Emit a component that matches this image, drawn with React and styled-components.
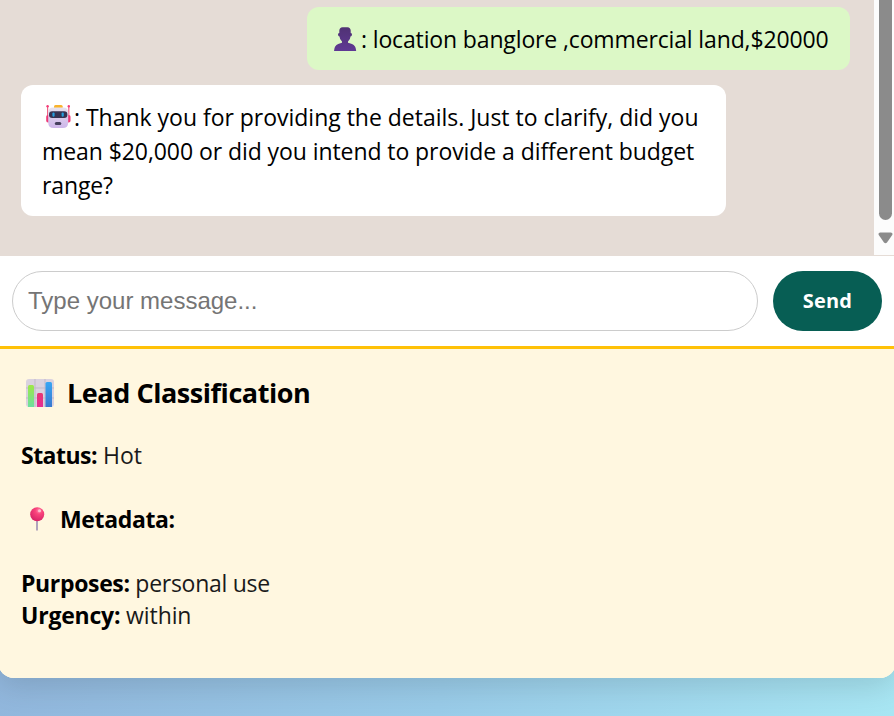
import React from "react";
import styled, { createGlobalStyle } from "styled-components";

const GlobalStyle = createGlobalStyle`
  * { box-sizing: border-box; }
  html, body { margin: 0; height: 716px; overflow: hidden; }
  body {
    background: linear-gradient(100deg, #91b6dc 0%, #99cbe8 50%, #a8e6f3 100%) 0 600px / 100% 116px no-repeat;
    font-family: "Open Sans", "Noto Sans", sans-serif;
    color: #000;
  }
`;

const Card = styled.main`
  width: 898px;
  height: 678px;
  margin-left: -2px;
  padding: 0 2px;
  display: flex;
  flex-direction: column;
  background: linear-gradient(#fff 346px, #ffc107 346px, #ffc107 349px, #fff7e0 349px);
  border-radius: 0 0 16px 16px;
  box-shadow: 0 8px 30px rgba(0, 0, 0, 0.13);
  overflow: hidden;
`;

const ChatArea = styled.section`
  flex: 0 0 256px;
  display: flex;
  background: #e5dcd6;
`;

const Messages = styled.div`
  flex: 1;
  display: flex;
  flex-direction: column;
  gap: 15px;
  padding: 7px 24px 0 21px;
`;

const Bubble = styled.div`
  width: ${(p) => p.$width}px;
  align-self: ${(p) => (p.$own ? "flex-end" : "flex-start")};
  padding: 15px 21px 14px;
  border-radius: 12px;
  background: ${(p) => (p.$own ? "#dcf8c6" : "#fff")};
`;

const Line = styled.div`
  display: flex;
  align-items: center;
  height: 34px;
  font-size: 23px;
  letter-spacing: ${(p) => p.$track || 0}px;
  white-space: pre;
`;

const Icon = styled.svg`
  flex: none;
  display: block;
  width: ${(p) => p.$w}px;
  height: ${(p) => p.$h}px;
  margin: ${(p) => p.$m || 0};
`;

const ScrollTrack = styled.div`
  width: 20px;
  height: 255px;
  padding-left: 5px;
  background: #fcfcfc;
`;

const ScrollThumb = styled.div`
  width: 13px;
  height: 220px;
  border-radius: 0 0 7px 7px;
  background: #8b8b8b;
`;

const Composer = styled.form`
  flex: 0 0 90px;
  display: flex;
  gap: 15px;
  padding: 15px 12px;
`;

const Input = styled.input`
  flex: 1;
  min-width: 0;
  height: 60px;
  padding: 0 15px;
  border: 1px solid #ccc;
  border-radius: 30px;
  background: #fff;
  font: 24px "Liberation Sans", Arial, sans-serif;
  outline: none;
  &::placeholder { color: #757575; opacity: 1; }
`;

const Send = styled.button`
  width: 109px;
  height: 60px;
  border: 0;
  padding: 0 0 2px 0;
  border-radius: 30px;
  background: #075e54;
  color: #fff;
  font: 700 20px "Open Sans", sans-serif;
  letter-spacing: 0.2px;
`;

const Lead = styled.section`
  flex: 1;
  padding: 27px 21px 0;
  border-top: 3px solid #ffc107;
  background: #fff7e0;
`;

const Title = styled.h2`
  display: flex;
  align-items: center;
  height: 34px;
  margin: 0 0 29px;
  font-size: 27px;
  font-weight: 700;
  letter-spacing: -0.44px;
`;

const TitleText = styled.span`
  padding-bottom: 2px;
`;

const Row = styled.p`
  display: flex;
  align-items: center;
  height: 32px;
  margin: 0 0 ${(p) => p.$after || 0}px;
  font-size: 23px;
  white-space: pre;
  color: #1a1a1a;
  letter-spacing: ${(p) => p.$track || 0}px;
`;

const Label = styled.strong`
  font-weight: 700;
  color: #000;
  letter-spacing: ${(p) => p.$track || 0}px;
`;

const Person = () => (
  <Icon viewBox="0 0 23 24" $w={23} $h={24} $m="-1px 4px 0 6px">
    <defs>
      <linearGradient id="bust" x2="0" y2="1">
        <stop stopColor="#503274" />
        <stop offset="1" stopColor="#5f3994" />
      </linearGradient>
    </defs>
    <path fill="url(#bust)" d="M5.300 6V3.500Q5.500.600 8.500.300h5q3 .3 3.200 3.200V6q1.600 0 1.300 1.800-.2 1.700-1.500 1.700-.2 3.200-2.500 5v1.200q1.500.6 4 1.300 3.900 1.300 4.200 7H0q.3-5.700 4.200-7 2.500-.7 3.800-1.300v-1.200q-2.300-1.800-2.500-5-1.300 0-1.500-1.700Q3.700 6 5.300 6z" />
  </Icon>
);

const Robot = () => (
  <Icon viewBox="0 0 25 24" $w={25} $h={24} $m="0 3px 0 4px">
    <defs>
      <linearGradient id="face" x2="0" y2="1">
        <stop stopColor="#e7e2ee" />
        <stop offset="1" stopColor="#cdb5ea" />
      </linearGradient>
    </defs>
    <path d="M1.600 1v10M22.800 1v10" stroke="#ee6185" strokeWidth="1.200" />
    <circle cx="1.600" cy="1.300" r="1.200" fill="#f43c78" />
    <circle cx="22.800" cy="1.300" r="1.200" fill="#f43c78" />
    <rect x=".2" y="10" width="4" height="7.500" rx="1.800" fill="#ee3976" />
    <rect x="20.500" y="10" width="4" height="7.500" rx="1.800" fill="#ee3976" />
    <rect x="8" y="0" width="8.700" height="4.500" rx="1.500" fill="#f9b32c" />
    <path fill="url(#face)" d="M7 2.600h10.500q4.500 0 4.700 5v10q0 5.500-5.500 5.500h-9q-5.500 0-5.500-5.500v-10q.3-5 4.800-5z" />
    <rect x="3" y="6.300" width="18.400" height="6.700" rx="3.200" fill="#363352" />
    <rect x="6.400" y="7.500" width="2.200" height="4.300" rx="1.100" fill="#249fdf" />
    <rect x="15.600" y="7.500" width="2.200" height="4.300" rx="1.100" fill="#249fdf" />
    <rect x="8.800" y="17" width="6.500" height="3" rx="1.500" fill="#46405e" />
  </Icon>
);

const Chart = () => (
  <Icon viewBox="0 0 28 28" $w={28} $h={28} $m="0 13px 0 5px">
    <defs>
      <linearGradient id="green" x2="0" y2="1"><stop stopColor="#9ee846" /><stop offset="1" stopColor="#6ce0a0" /></linearGradient>
      <linearGradient id="blue" x2="0" y2="1"><stop stopColor="#37a6f4" /><stop offset="1" stopColor="#3978cf" /></linearGradient>
      <linearGradient id="pink" x2="0" y2="1"><stop stopColor="#e63672" /><stop offset="1" stopColor="#e52e94" /></linearGradient>
    </defs>
    <rect width="28" height="28" rx="3" fill="#dad2df" />
    <path d="M9 0v28M19 0v28M0 9h28M0 19h28" stroke="#c1b9c9" />
    <path fill="url(#green)" d="M2 28V7.500Q2 6 3.500 6h3Q8 6 8 7.500V28z" />
    <path fill="url(#pink)" d="M11 28V15.500q0-1.500 1.500-1.500h3q1.500 0 1.500 1.500V28z" />
    <path fill="url(#blue)" d="M19.500 28V4.500Q19.500 3 21 3h3.500Q26 3 26 4.500V28z" />
  </Icon>
);

const Pin = () => (
  <Icon viewBox="0 0 15 24" $w={15} $h={24} $m="0 15px 0 9px">
    <defs>
      <radialGradient id="ball" cx=".63" cy=".25" r=".75">
        <stop stopColor="#ff8fb0" /><stop offset=".32" stopColor="#fa457c" /><stop offset="1" stopColor="#d92368" />
      </radialGradient>
    </defs>
    <path d="M7 13v10.500" stroke="#a899b8" strokeWidth="1.800" />
    <circle cx="7.200" cy="7.200" r="7" fill="url(#ball)" />
    <circle cx="9.500" cy="3.800" r="1.500" fill="#ffc0d0" />
  </Icon>
);

export default function App() {
  return (
    <>
      <GlobalStyle />
      <Card>
        <ChatArea>
          <Messages>
            <Bubble $own $width={543}>
              <Line $track={-0.14}><Person />: location banglore ,commercial land,$20000</Line>
            </Bubble>
            <Bubble $width={705}>
              <Line $track={-0.02}><Robot />: Thank you for providing the details. Just to clarify, did you</Line>
              <Line $track={-0.075}>mean $20,000 or did you intend to provide a different budget</Line>
              <Line $track={-0.12}>range?</Line>
            </Bubble>
          </Messages>
          <ScrollTrack>
            <ScrollThumb />
            <Icon viewBox="0 0 15 12" $w={15} $h={12} $m="12px 0 0 -1px">
              <path d="M2 .5h11q2 .3 1.400 2.200L9 10.500q-1.500 1.500-3 0L.6 2.700Q0 .8 2 .5z" fill="#8b8b8b" />
            </Icon>
          </ScrollTrack>
        </ChatArea>
        <Composer onSubmit={(e) => e.preventDefault()}>
          <Input placeholder="Type your message..." />
          <Send>Send</Send>
        </Composer>
        <Lead>
          <Title><Chart /><TitleText>Lead Classification</TitleText></Title>
          <Row $after={32}><Label $track={-0.52}>Status:</Label> Hot</Row>
          <Row $after={32}><Pin /><Label $track={-0.36}>Metadata:</Label></Row>
          <Row $track={-0.28}><Label $track={-0.35}>Purposes:</Label> personal use</Row>
          <Row $track={-0.1}><Label $track={-0.22}>Urgency:</Label> within</Row>
        </Lead>
      </Card>
    </>
  );
}
